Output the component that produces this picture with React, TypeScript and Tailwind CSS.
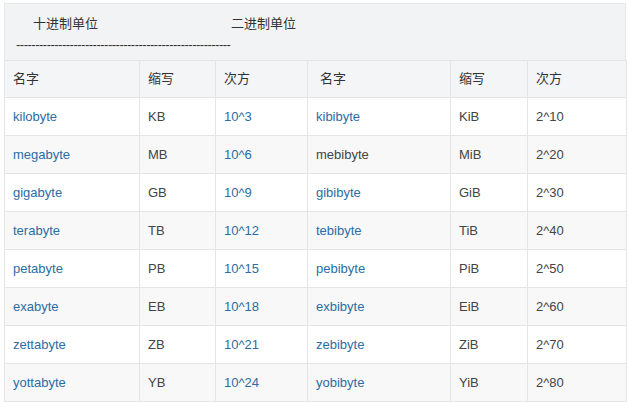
export default function App() {
  const rows = [
    ["kilobyte","KB","10^3","kibibyte","KiB","2^10"],
    ["megabyte","MB","10^6","mebibyte","MiB","2^20"],
    ["gigabyte","GB","10^9","gibibyte","GiB","2^30"],
    ["terabyte","TB","10^12","tebibyte","TiB","2^40"],
    ["petabyte","PB","10^15","pebibyte","PiB","2^50"],
    ["exabyte","EB","10^18","exbibyte","EiB","2^60"],
    ["zettabyte","ZB","10^21","zebibyte","ZiB","2^70"],
    ["yottabyte","YB","10^24","yobibyte","YiB","2^80"],
  ];
  const widths = ["w-[135px]","w-[76px]","w-[92px]","w-[143px]","w-[77px]","w-[99px]"];
  const link = (c: number, r: number) => (c === 0 || c === 2 || (c === 3 && r !== 1));
  return (
    <div className="w-[629px] h-[402px] bg-white pt-[3px] pl-[4px] text-[13px] text-[#333]" style={{ fontFamily: '"Liberation Sans","Noto Sans CJK SC",sans-serif' }}>
      <div className="w-[622px] h-[57px] bg-[#f1f3f4] border border-[#e6e8ea] border-b-0 pl-[28px] pt-[10px]">
        <div className="flex"><span className="w-[198px]">十进制单位</span><span>二进制单位</span></div>
        <div className="-ml-[17px] mt-[4px] leading-none tracking-[-0.5px]">{"-".repeat(56)}</div>
      </div>
      <table className="border-collapse">
        <thead>
          <tr className="bg-[#f4f5f6] h-[37px]">
            {["名字","缩写","次方","名字","缩写","次方"].map((h, i) => (
              <th key={i} className={`${widths[i]} border border-[#e3e5e7] font-normal text-left ${i===3?'pl-[12px]':'pl-[8px]'}`}>{h}</th>
            ))}
          </tr>
        </thead>
        <tbody>
          {rows.map((r, ri) => (
            <tr key={ri} className={`h-[38px] ${ri % 2 ? 'bg-[#f8f8f8]' : 'bg-white'}`}>
              {r.map((c, ci) => (
                <td key={ci} className={`border border-[#e3e5e7] pl-[8px] ${link(ci, ri) ? 'text-[#2b6da4]' : 'text-[#444]'}`}>{c}</td>
              ))}
            </tr>
          ))}
        </tbody>
      </table>
    </div>
  );
}
